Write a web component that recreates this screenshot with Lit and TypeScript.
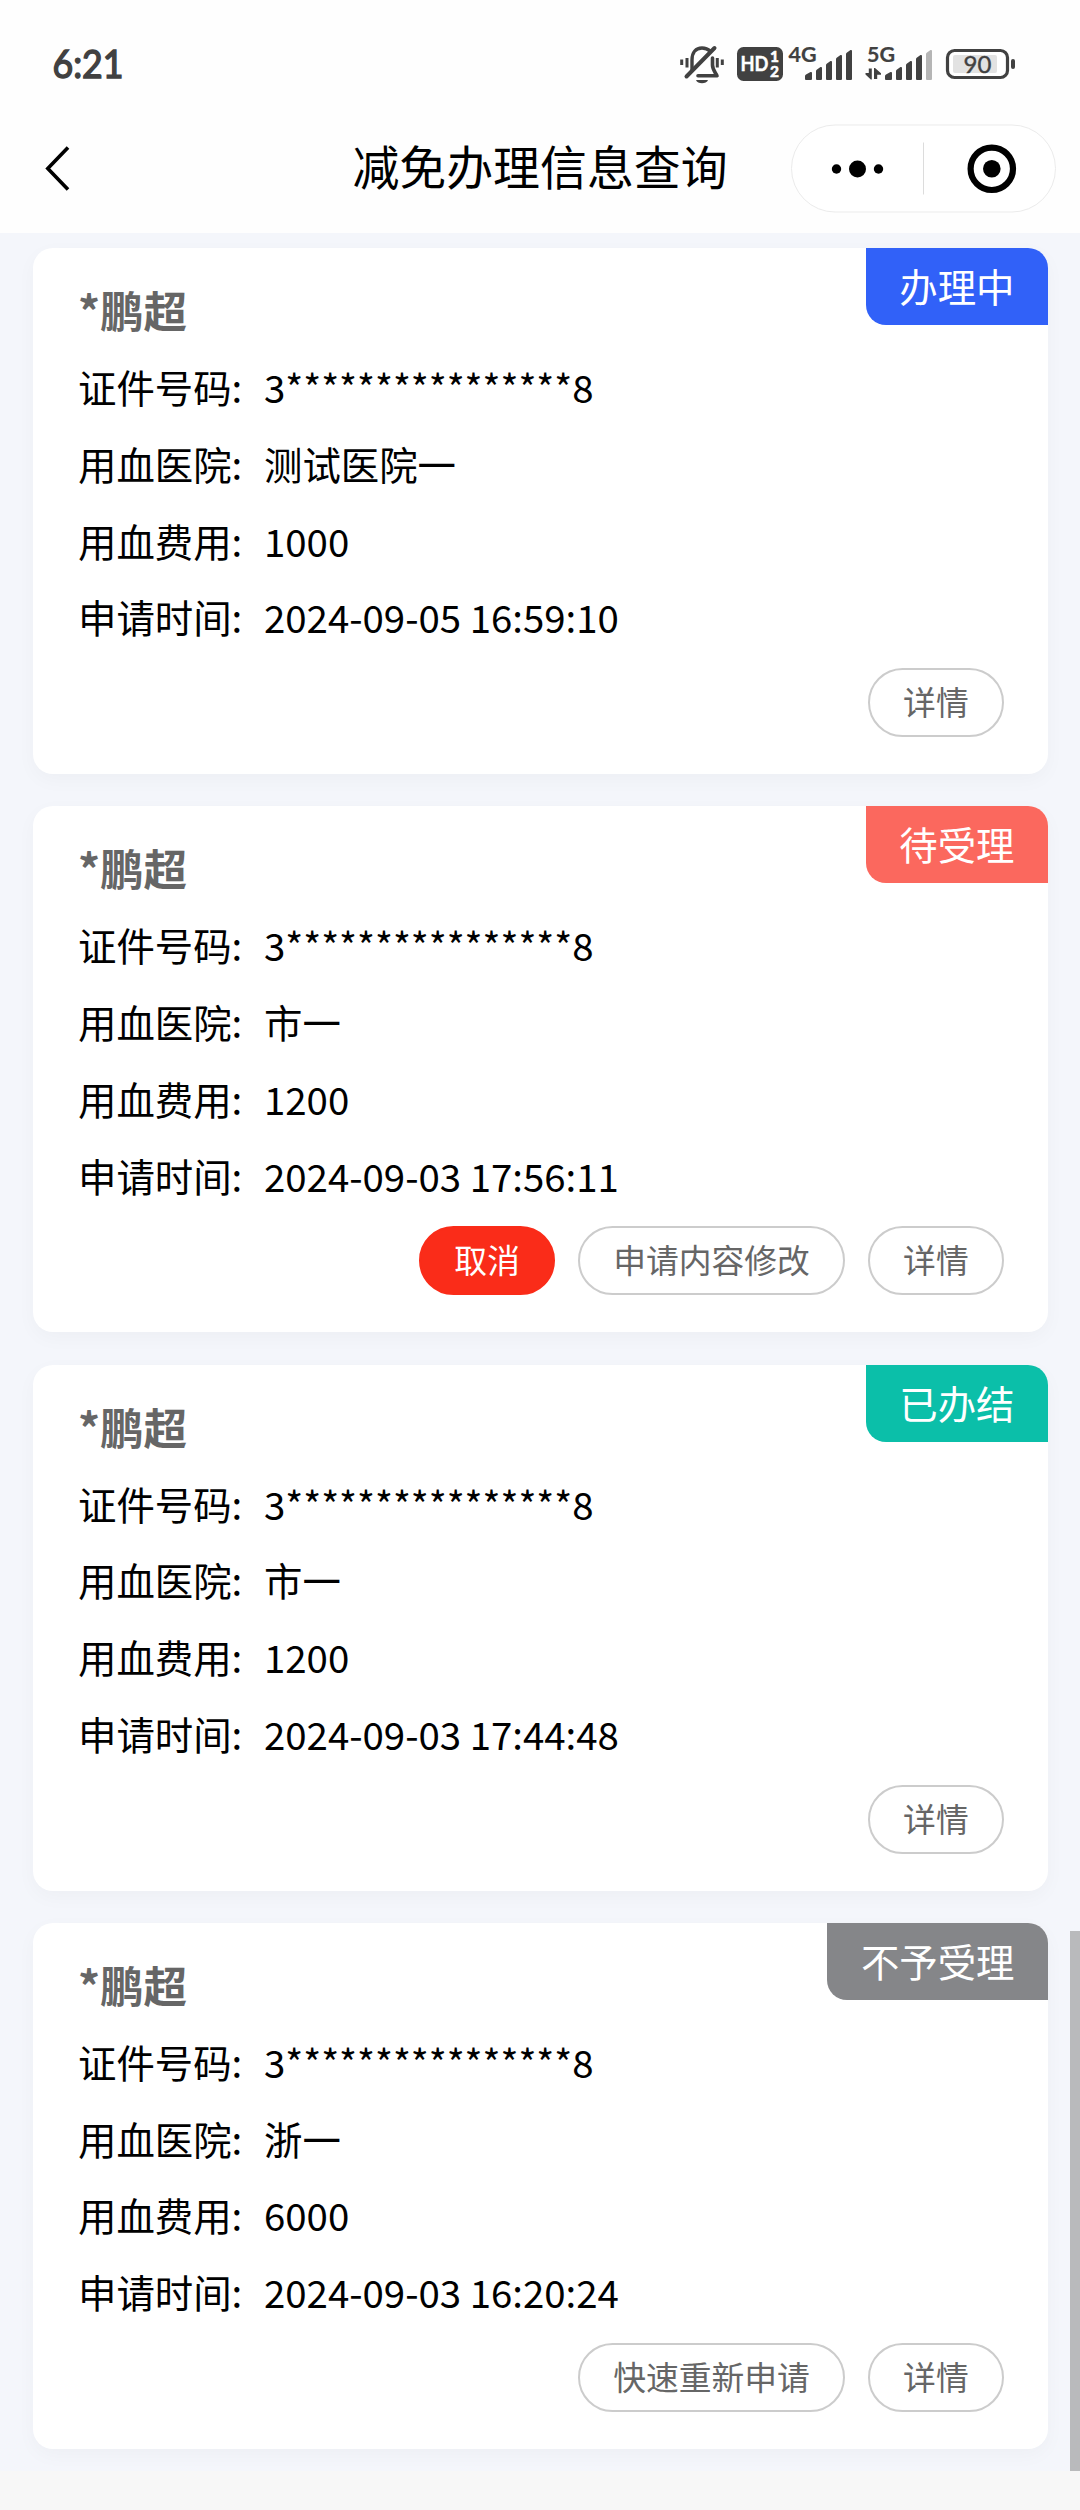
import { LitElement, html, css, svg } from "lit";
import { customElement, property } from "lit/decorators.js";

interface Action {
  label: string;
  danger?: boolean;
}

interface RecordItem {
  name: string;
  idNo: string;
  hospital: string;
  fee: string;
  time: string;
  status: string;
  tone: "blue" | "coral" | "teal" | "gray";
  actions: Action[];
}

const ID_NO = "3" + "*".repeat(16) + "8";

const RECORDS: RecordItem[] = [
  {
    name: "*鹏超", idNo: ID_NO, hospital: "测试医院一", fee: "1000",
    time: "2024-09-05 16:59:10", status: "办理中", tone: "blue",
    actions: [{ label: "详情" }],
  },
  {
    name: "*鹏超", idNo: ID_NO, hospital: "市一", fee: "1200",
    time: "2024-09-03 17:56:11", status: "待受理", tone: "coral",
    actions: [{ label: "取消", danger: true }, { label: "申请内容修改" }, { label: "详情" }],
  },
  {
    name: "*鹏超", idNo: ID_NO, hospital: "市一", fee: "1200",
    time: "2024-09-03 17:44:48", status: "已办结", tone: "teal",
    actions: [{ label: "详情" }],
  },
  {
    name: "*鹏超", idNo: ID_NO, hospital: "浙一", fee: "6000",
    time: "2024-09-03 16:20:24", status: "不予受理", tone: "gray",
    actions: [{ label: "快速重新申请" }, { label: "详情" }],
  },
];

@customElement("status-bar")
export class StatusBar extends LitElement {
  static styles = css`
    :host {
      display: flex;
      justify-content: space-between;
      box-sizing: border-box;
      height: 104px;
      padding: 40px 60px 0 50px;
      color: #414141;
    }
    .clock {
      display: block;
      width: 90px;
      height: 50px;
    }
    .icons {
      display: block;
      width: 340px;
      height: 50px;
    }
    .t {
      font-family: Lato, sans-serif;
      font-weight: 700;
    }
  `;

  private bars(x: number, faded: boolean) {
    const tops = [72, 67, 61, 55, 50];
    const xs = [0, 11, 21, 31, 41];
    return tops.map((t, i) => {
      const l = x + xs[i];
      const w = i === 0 ? 7 : 6;
      return svg`<path d="M${l} ${t + 4}Q${l} ${t + 3} ${l + 1} ${t + 2.5}L${l + w - 1.5} ${t}Q${l + w} ${t - 0.5} ${l + w} ${t + 1}V79Q${l + w} 80 ${l + w - 1} 80H${l + 1}Q${l} 80 ${l} 79Z"
        fill=${faded && i === 4 ? "#b5b5b5" : "#414141"}></path>`;
    });
  }

  render() {
    return html`
      <svg class="clock" viewBox="50 40 90 50" fill="#414141">
        <text x="52.500" y="78.300" font-family="Lato, sans-serif" font-weight="400" font-size="39.500"
          stroke="#414141" stroke-width="1.500" textLength="71" lengthAdjust="spacingAndGlyphs">6:21</text>
      </svg>
      <svg class="icons" viewBox="680 40 340 50" fill="#414141">
        <g fill="none" stroke="#414141" stroke-width="3" stroke-linecap="round" stroke-linejoin="round">
          <path d="M681.7 59.500V65M687 58V67.500M717.3 58V67.500M722.3 59.500V65" stroke-linecap="butt"></path>
          <path d="M692 70V60C692 52 696 48 702 48C705.500 48 708 49 710 51" stroke-width="3.400"></path>
          <path d="M712.5 58V65C712.5 69 714 70.500 717 75.800H698" stroke-width="3.600"></path>
          <path d="M714.500 48L686.500 76.500" stroke-width="4"></path>
        </g>
        <path d="M696 80H708C706.5 84.4 697.500 84.400 696 80Z"></path>
        <rect x="737" y="47" width="46" height="34" rx="6.500"></rect>
        <text class="t" x="740.500" y="71" font-size="20.500" fill="#fff" stroke="#fff" stroke-width="0.400" textLength="28" lengthAdjust="spacingAndGlyphs">HD</text>
        <text class="t" x="770" y="61.500" font-size="15.500" fill="#fff" stroke="#fff" stroke-width="0.600">1</text>
        <text class="t" x="770" y="76.500" font-size="15.500" fill="#fff" stroke="#fff" stroke-width="0.600">2</text>
        <text class="t" x="788.500" y="62" font-size="20.500" stroke="#414141" stroke-width="0.200" textLength="28" lengthAdjust="spacingAndGlyphs">4G</text>
        ${this.bars(805, false)}
        <text class="t" x="867" y="62" font-size="20.500" stroke="#414141" stroke-width="0.200" textLength="28" lengthAdjust="spacingAndGlyphs">5G</text>
        <path d="M868.800 68.500H871.800V79.500H870.800L865.500 74.500V73H868.800ZM874 68H875L881 73.200V74.700H877.200V79H874Z"></path>
        ${this.bars(885, true)}
        <rect x="947.500" y="50.500" width="60" height="27" rx="7" fill="#fff" stroke="#414141" stroke-width="3.200"></rect>
        <rect x="953" y="55" width="44" height="18" rx="2" fill="#e2e2e2"></rect>
        <rect x="1011" y="59" width="4" height="10" rx="2"></rect>
        <text x="977.500" y="72.500" font-family="Lato" font-weight="400" font-size="24" text-anchor="middle" stroke="#414141" stroke-width="0.400">90</text>
      </svg>
    `;
  }
}

@customElement("nav-bar")
export class NavBar extends LitElement {
  static styles = css`
    :host {
      display: grid;
      grid-template-columns: 1fr auto 1fr;
      align-items: center;
      box-sizing: border-box;
      height: 129px;
      padding: 0 24px 0 40px;
    }
    .back {
      display: block;
      width: 36px;
      height: 50px;
    }
    .title {
      font-size: 46.900px;
      line-height: 68px;
      color: #000;
      margin: 0 0 7px -16px;
    }
    .capsule {
      display: block;
      justify-self: end;
      width: 266px;
      height: 89px;
    }
  `;

  render() {
    return html`
      <svg class="back" viewBox="40 144 36 50" fill="none" stroke="#000" stroke-width="3.6">
        <path d="M68 147.500L47.800 168.500L68 189.500"></path>
      </svg>
      <span class="title">减免办理信息查询</span>
      <svg class="capsule" viewBox="790 123.500 266 89">
        <rect x="791.5" y="124.5" width="264" height="87" rx="43.500" fill="#fff" stroke="#ebebeb"></rect>
        <path d="M923.500 142V194" stroke="#dcdcdc"></path>
        <circle cx="836.500" cy="168.500" r="4.700"></circle>
        <circle cx="857.500" cy="168.500" r="8.500"></circle>
        <circle cx="878.500" cy="168.500" r="4.700"></circle>
        <circle cx="991.800" cy="168.300" r="21.200" fill="none" stroke="#000" stroke-width="6.200"></circle>
        <circle cx="991.800" cy="168.300" r="8.800"></circle>
      </svg>
    `;
  }
}

@customElement("record-card")
export class RecordCard extends LitElement {
  @property({ attribute: false }) item!: RecordItem;

  static styles = css`
    :host {
      display: block;
      position: relative;
      box-sizing: border-box;
      height: 526px;
      padding: 23px 44px 0 45px;
      border-radius: 20px;
      background: #fff;
      box-shadow: 0 6px 20px rgba(0, 0, 0, 0.03);
    }
    .badge {
      position: absolute;
      top: 0;
      right: 0;
      padding: 0 33.500px 3px;
      border-radius: 0 20px 0 20px;
      font-size: 38.400px;
      line-height: 74px;
      color: #fff;
    }
    .blue { background: #3161f8; }
    .coral { background: #fb685e; }
    .teal { background: #0bbfa9; }
    .gray { background: #858689; }
    .name {
      font-size: 43.500px;
      font-weight: 700;
      line-height: 77px;
      color: #666;
    }
    .row {
      display: flex;
      font-size: 38.400px;
      line-height: 76.800px;
      color: #000;
    }
    .label {
      width: 186px;
    }
    .actions {
      display: flex;
      justify-content: flex-end;
      gap: 22.600px;
      margin-top: 13px;
    }
    .btn {
      box-sizing: border-box;
      height: 69px;
      padding: 0 33.300px;
      border: 2px solid #ccc;
      border-radius: 35px;
      font-size: 32.800px;
      line-height: 61.500px;
      color: #666;
    }
    .danger {
      border-color: #fa2c19;
      background: #fa2c19;
      color: #fff;
    }
  `;

  render() {
    const r = this.item;
    const rows = [
      ["证件号码:", r.idNo],
      ["用血医院:", r.hospital],
      ["用血费用:", r.fee],
      ["申请时间:", r.time],
    ];
    return html`
      <span class="badge ${r.tone}">${r.status}</span>
      <div class="name">${r.name}</div>
      ${rows.map(([k, v]) => html`<div class="row"><span class="label">${k}</span><span>${v}</span></div>`)}
      <div class="actions">
        ${r.actions.map((a) => html`<span class="btn ${a.danger ? "danger" : ""}">${a.label}</span>`)}
      </div>
    `;
  }
}

@customElement("app-root")
export class AppRoot extends LitElement {
  static styles = css`
    :host {
      display: block;
      width: 1080px;
      height: 2510px;
      overflow: hidden;
      background: #f7f7f7;
      font-family: "Noto Sans CJK SC", sans-serif;
    }
    .top {
      background: #fefefe;
    }
    .list {
      position: relative;
      display: flex;
      flex-direction: column;
      gap: 32.300px;
      box-sizing: border-box;
      height: 2238px;
      padding: 15px 32px 0 33px;
      background: #f4f6fb;
    }
    .scrollbar {
      position: absolute;
      right: 0;
      bottom: 0;
      width: 10px;
      height: 540px;
      background: #b9babc;
    }
  `;

  render() {
    return html`
      <div class="top">
        <status-bar></status-bar>
        <nav-bar></nav-bar>
      </div>
      <div class="list">
        ${RECORDS.map((r) => html`<record-card .item=${r}></record-card>`)}
        <div class="scrollbar"></div>
      </div>
    `;
  }
}
